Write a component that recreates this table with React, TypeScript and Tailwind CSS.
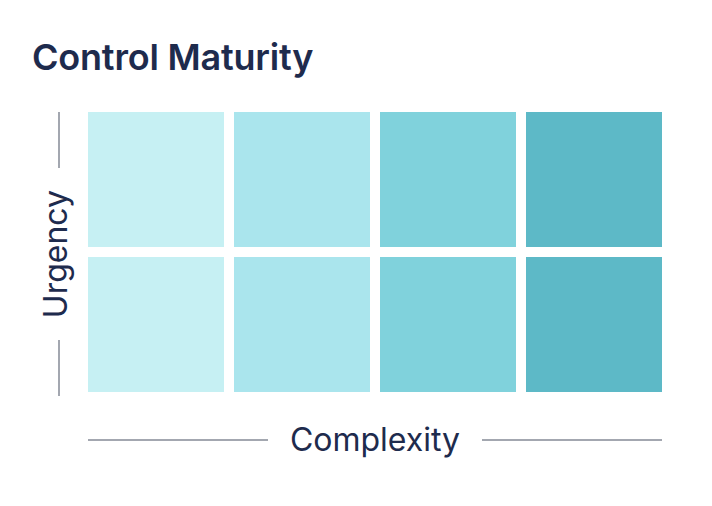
const cols = ["bg-[#c6f0f3]", "bg-[#aae5ed]", "bg-[#80d2dc]", "bg-[#5db9c7]"];

export default function App() {
    return (
        <div className="w-[712px] h-[506px] bg-white font-['Inter',sans-serif] text-[#1e2b4d]">
            <div className="pt-[39px] pl-[32px]">
                <h1 className="text-[36px] leading-[36px] font-semibold tracking-[-0.2px]">
                    Control Maturity
                </h1>
                <div className="mt-[37px] flex">
                    {/* vertical axis */}
                    <div className="w-[54px] h-[284px] flex flex-col items-center">
                        <div className="w-[2px] flex-1 bg-[#a3a7b0]" />
                        <span className="mt-[22px] mb-[22px] mr-[6px] text-[32px] leading-[32px] [writing-mode:vertical-rl] rotate-180">
                            Urgency
                        </span>
                        <div className="w-[2px] flex-1 bg-[#a3a7b0]" />
                    </div>
                    <div className="ml-[2px] w-[574px]">
                        <div className="grid grid-cols-4 gap-x-[10px] gap-y-[10px]">
                            {[0, 1].map((r) =>
                                cols.map((c, i) => (
                                    <div key={`${r}-${i}`} className={`h-[135px] ${c}`} />
                                ))
                            )}
                        </div>
                        <div className="mt-[32px] h-[32px] flex items-center gap-[22px]">
                            <div className="h-[2px] flex-1 bg-[#a3a7b0]" />
                            <span className="text-[32px] leading-[32px]">Complexity</span>
                            <div className="h-[2px] flex-1 bg-[#a3a7b0]" />
                        </div>
                    </div>
                </div>
            </div>
        </div>
    );
}
